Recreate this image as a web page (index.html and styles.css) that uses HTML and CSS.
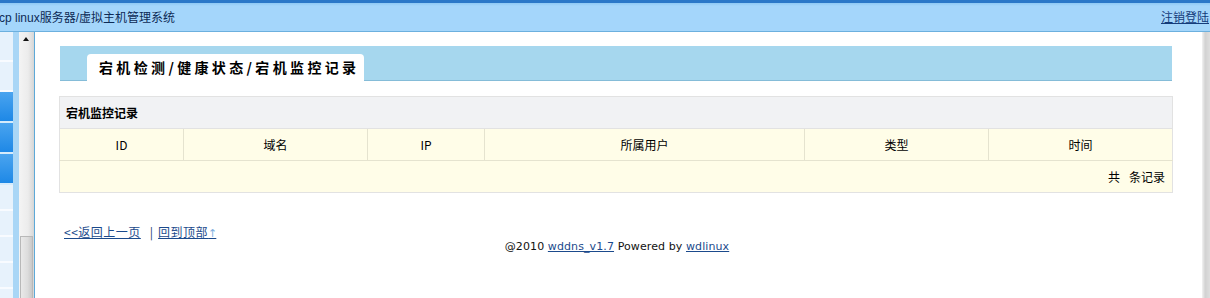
FILE: index.html
```html
<!DOCTYPE html>
<html lang="zh-CN">
<head>
<meta charset="utf-8">
<title>宕机监控记录</title>
<link rel="stylesheet" href="styles.css">
</head>
<body>
<div class="top">
  <span class="title">cp linux服务器/虚拟主机管理系统</span>
  <a class="logout" href="#">注销登陆</a>
</div>
<div class="main">
  <div class="side">
    <div class="item"></div>
    <div class="item"></div>
    <div class="item on"></div>
    <div class="item on"></div>
    <div class="item on"></div>
    <div class="item sm"></div>
    <div class="item sm"></div>
    <div class="item sm"></div>
    <div class="item sm"></div>
  </div>
  <div class="strip"></div>
  <div class="vscroll">
    <div class="up"></div>
    <div class="thumb"></div>
  </div>
  <div class="content">
    <div class="tabbar"><div class="tab">宕机检测/健康状态/宕机监控记录</div></div>
    <table class="grid">
      <tr><th colspan="6" class="cap">宕机监控记录</th></tr>
      <tr class="head">
        <td class="c1">ID</td>
        <td class="c2">域名</td>
        <td class="c3">IP</td>
        <td class="c4">所属用户</td>
        <td class="c5">类型</td>
        <td class="c6">时间</td>
      </tr>
      <tr><td colspan="6" class="total">共<span class="gap"></span>条记录</td></tr>
    </table>
    <div class="links"><a href="#">&lt;&lt;返回上一页</a><span class="sep">|</span><a href="#">回到顶部<span class="arrow">↑</span></a></div>
    <div class="footer">@2010 <a href="#">wddns_v1.7</a> Powered by <a href="#">wdlinux</a></div>
  </div>
  <div class="rshade"></div>
</div>
</body>
</html>
```
FILE: styles.css
```css
html, body {
  margin: 0;
  padding: 0;
  width: 1210px;
  height: 298px;
  overflow: hidden;
  background: #ffffff;
  font-family: "Liberation Sans", "Noto Sans CJK SC", sans-serif;
  font-size: 12px;
  color: #000;
}

.top {
  height: 28px;
  border-top: 3px solid #2b78c8;
  border-bottom: 1px solid #6cb0de;
  background: linear-gradient(#8ec9f4 0, #a4d6fb 3px, #a4d6fb 100%);
  display: flex;
  align-items: center;
  justify-content: space-between;
}

.title {
  color: #0d2a55;
  font-size: 12px;
  margin-left: -1px;
  padding-bottom: 2px;
}

.logout {
  color: #143c7a;
  text-decoration: underline;
  margin-right: 1px;
  padding-bottom: 2px;
  font-family: "Noto Sans CJK SC", sans-serif;
}

.main {
  display: flex;
  height: 266px;
}

.side {
  width: 13px;
  display: flex;
  flex-direction: column;
  background: #e9f3fc;
}

.item {
  height: 28px;
  border-bottom: 2px solid #f8fbff;
  background: #e7f2fc;
}

.item.on {
  height: 29px;
  border-bottom: 2px solid #d6ebfb;
  background: linear-gradient(#4aa4ef, #1e88e6);
}

.item.sm {
  height: 24px;
}

.strip {
  width: 6px;
  background: #a9d6f6;
}

.vscroll {
  width: 15px;
  position: relative;
  background: linear-gradient(90deg, #f4f4f4, #ececec 60%, #d6d6d6);
  border-right: 1px solid #5da9d8;
}

.up {
  position: absolute;
  left: 4px;
  top: 5px;
  width: 0;
  height: 0;
  border-left: 3px solid transparent;
  border-right: 3px solid transparent;
  border-bottom: 4px solid #111;
}

.thumb {
  position: absolute;
  left: 1px;
  right: 1px;
  top: 204px;
  bottom: 0;
  border: 1px solid #b8b8b8;
  border-bottom: none;
  background: linear-gradient(90deg, #e9e9e9, #dcdcdc 60%, #c8c8c8);
}

.content {
  flex: 1;
  padding: 14px 29px 0 24px;
  background: #fff;
}

.rshade {
  width: 8px;
  background: linear-gradient(90deg, #f2f2f2, #d2d2d2 40%, #dedede);
}

.tabbar {
  margin-left: 1px;
  margin-right: 1px;
  height: 34px;
  background: #a6d7ee;
  border-bottom: 1px solid #85bcd8;
  display: flex;
  align-items: flex-end;
  padding-left: 27px;
}

.tab {
  background: #fff;
  height: 27px;
  line-height: 27px;
  padding: 0 5px 0 12px;
  border-radius: 4px 4px 0 0;
  font-family: "Noto Sans CJK SC", sans-serif;
  font-size: 14px;
  font-weight: bold;
  letter-spacing: 3.35px;
  color: #000;
  margin-bottom: -1px;
}

.grid {
  margin-top: 15px;
  width: 1114px;
  border-collapse: collapse;
  border: 1px solid #e2e2e2;
  background: #fffde8;
  font-family: "Noto Sans CJK SC", sans-serif;
}

.grid th, .grid td {
  height: 31px;
  padding: 0;
  font-size: 12px;
  font-weight: normal;
}

.grid .cap {
  background: #f1f2f4;
  text-align: left;
  padding-left: 6px;
  font-weight: bold;
  border-bottom: 1px solid #e2e2e2;
}

.head td {
  text-align: center;
  border-left: 1px solid #e5e3cf;
  border-bottom: 1px solid #e5e3cf;
}

.head td:first-child {
  border-left: none;
}

.c1 { width: 123px; }
.c2 { width: 183px; }
.c3 { width: 116px; }
.c4 { width: 319px; }
.c5 { width: 183px; }
.c6 { width: auto; }

.grid .total {
  text-align: right;
  padding-right: 7px;
}

.gap {
  display: inline-block;
  width: 9px;
}

.links {
  margin-top: 31px;
  padding-left: 5px;
  font-family: "Noto Sans CJK SC", sans-serif;
  font-size: 12px;
  line-height: 16px;
  height: 16px;
}

.links a {
  color: #1b4a8c;
  text-decoration: underline;
  letter-spacing: 0.5px;
}

.sep {
  color: #1b3b6e;
  margin: 0 5px 0 9px;
}

.arrow {
  color: #7fb0de;
  font-family: "DejaVu Sans", sans-serif;
  font-size: 11px;
  letter-spacing: -1px;
}

.footer {
  text-align: center;
  margin-top: -1px;
  padding-left: 2px;
  font-family: "DejaVu Sans", "Noto Sans CJK SC", sans-serif;
  font-size: 11px;
  letter-spacing: 0.1px;
  line-height: 16px;
  color: #111;
}

.footer a {
  color: #1b4a8c;
  text-decoration: underline;
}
```
